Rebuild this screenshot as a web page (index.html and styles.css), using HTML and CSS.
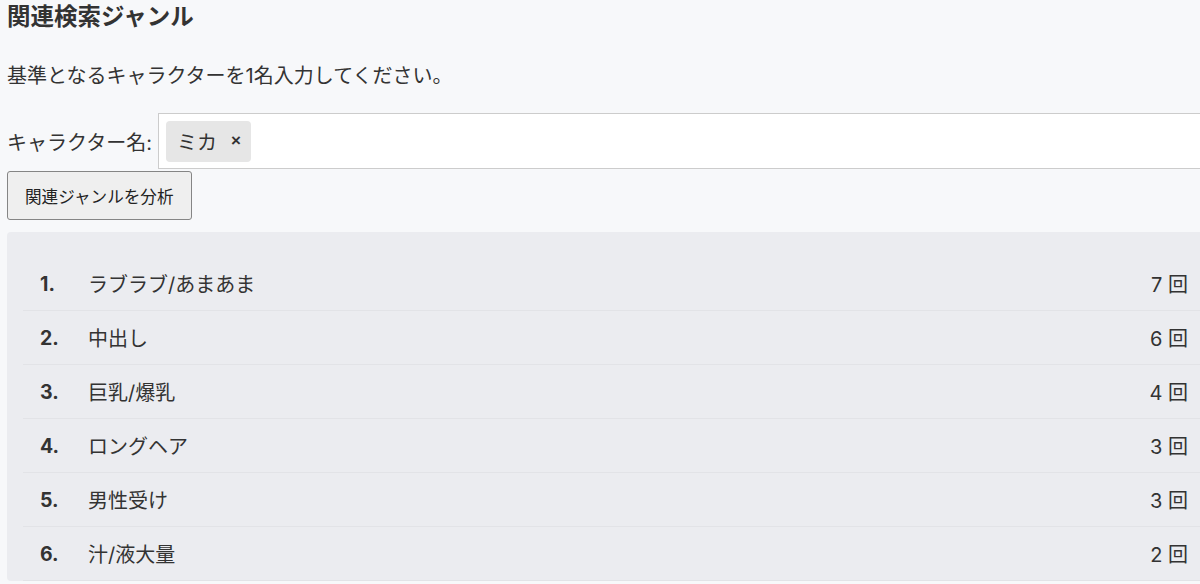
FILE: index.html
```html
<!DOCTYPE html>
<html lang="ja">
<head>
<meta charset="utf-8">
<title>関連検索ジャンル</title>
<link rel="stylesheet" href="styles.css">
</head>
<body>
<div class="page">
  <h2 class="title">関連検索ジャンル</h2>
  <p class="desc">基準となるキャラクターを1名入力してください。</p>
  <div class="field">
    <label class="label">キャラクター名:</label>
    <div class="input">
      <span class="chip"><span class="chip-text">ミカ</span><span class="chip-x">×</span></span>
    </div>
  </div>
  <button class="btn">関連ジャンルを分析</button>
  <div class="panel">
    <ol class="list">
      <li class="row"><span class="num">1.</span><span class="name">ラブラブ/あまあま</span><span class="count">7 回</span></li>
      <li class="row"><span class="num">2.</span><span class="name">中出し</span><span class="count">6 回</span></li>
      <li class="row"><span class="num">3.</span><span class="name">巨乳/爆乳</span><span class="count">4 回</span></li>
      <li class="row"><span class="num">4.</span><span class="name">ロングヘア</span><span class="count">3 回</span></li>
      <li class="row"><span class="num">5.</span><span class="name">男性受け</span><span class="count">3 回</span></li>
      <li class="row"><span class="num">6.</span><span class="name">汁/液大量</span><span class="count">2 回</span></li>
    </ol>
  </div>
</div>
</body>
</html>
```

FILE: styles.css
```css
html, body {
  margin: 0;
  padding: 0;
  background: #f7f8fa;
  overflow: hidden;
}
body {
  font-family: "Inter", "Noto Sans CJK JP", sans-serif;
  color: #333;
  font-size: 20px;
}
.page {
  width: 1210px;
  padding: 2px 0 0 7px;
}
.title {
  margin: 0;
  font-size: 23.5px;
  line-height: 30px;
  font-weight: 700;
  color: #333;
}
.desc {
  margin: 29px 0 0;
  line-height: 30px;
}
.field {
  display: flex;
  align-items: center;
  gap: 6px;
  margin-top: 22px;
}
.label {
  white-space: nowrap;
}
.input {
  flex: 1;
  height: 56px;
  box-sizing: border-box;
  border: 1px solid #cccccc;
  background: #fff;
  display: flex;
  align-items: center;
  padding: 0 7px;
}
.chip {
  display: flex;
  align-items: center;
  height: 41px;
  padding: 0 10px 0 11px;
  background: #e6e6e6;
  border-radius: 4px;
  gap: 14px;
}
.chip-text {
  font-size: 20px;
}
.chip-x {
  font-size: 17px;
  font-weight: 700;
  font-family: "Liberation Sans", sans-serif;
}
.btn {
  display: block;
  margin-top: 2px;
  height: 49px;
  padding: 0 17px;
  font-family: "Inter", "Noto Sans CJK JP", sans-serif;
  font-size: 16.6px;
  color: #222;
  background: #efefef;
  border: 1px solid #858585;
  border-radius: 3px;
}
.panel {
  margin-top: 12px;
  background: #ebecf0;
  border-radius: 4px;
  padding: 25px 0 0 16px;
}
.list {
  list-style: none;
  margin: 0;
  padding: 0;
}
.row {
  display: flex;
  align-items: center;
  height: 53px;
  border-bottom: 1px solid #e2e3e7;
  padding: 0 29px 0 17px;
}
.num {
  width: 48px;
  font-weight: 700;
  font-size: 19.5px;
  color: #333;
}
.name {
  flex: 1;
}
.count {
  white-space: nowrap;
}
```
